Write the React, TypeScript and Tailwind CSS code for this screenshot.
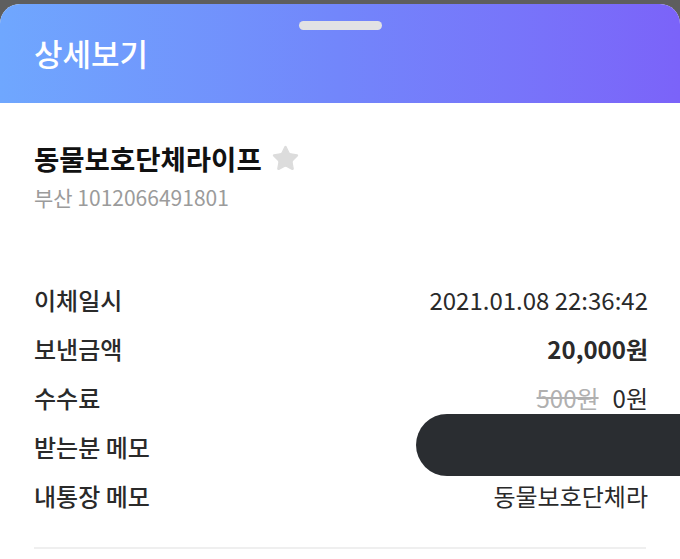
import { Star } from "lucide-react";

const rows = [
  { label: "이체일시", value: <span className="font-normal">2021.01.08 22:36:42</span> },
  { label: "보낸금액", value: <span className="font-bold">20,000원</span> },
  {
    label: "수수료",
    value: (
      <span className="flex items-center gap-[14px]">
        <span className="text-[#b0b0b0] line-through">500원</span>
        <span>0원</span>
      </span>
    ),
  },
  { label: "받는분 메모", value: null },
  { label: "내통장 메모", value: <span>동물보호단체라</span> },
];

const DetailSheet = () => {
  return (
    <section className="relative mt-[4px] flex h-[555px] flex-col overflow-hidden rounded-t-[20px] bg-white">
      <header className="relative h-[99px] bg-gradient-to-r from-[#6fa7fe] via-[#7286fb] to-[#7b63f9] px-[34px]">
        <div className="mx-auto mt-[17px] h-[9px] w-[83px] rounded-full bg-[#e2e2e4]" />
        <h1 className="mt-[1px] text-[31px] font-medium leading-[44px] text-white">상세보기</h1>
      </header>

      <div className="pl-[34px] pr-[32px]">
        <div className="mt-[38px] flex items-center gap-[9px]">
          <h2 className="text-[27.5px] font-bold leading-[34px] text-[#111]">동물보호단체라이프</h2>
          <Star className="h-[29px] w-[29px] fill-[#dcdcdc] text-[#dcdcdc]" strokeWidth={1} />
        </div>
        <p className="mt-[8px] text-[21px] leading-[28px] text-[#9b9b9b]">부산 1012066491801</p>

        <div className="mt-[64px] flex flex-col">
          {rows.map((row) => (
            <div
              key={row.label}
              className="flex h-[49px] items-center justify-between text-[24px] text-[#2a2a2a]"
            >
              <span className="font-medium">{row.label}</span>
              {row.value}
            </div>
          ))}
        </div>

        <div className="mr-[2px] mt-[27px] h-[2px] bg-[#efefef]" />
      </div>

      {/* redacted memo */}
      <div className="absolute left-[416px] top-[410px] h-[62px] w-[270px] rounded-l-full bg-[#2a2d31]" />
    </section>
  );
};

export default function App() {
  return (
    <div
      className="h-[559px] w-[680px] overflow-hidden bg-[#5e5e5e]"
      style={{ fontFamily: '"Noto Sans CJK KR", "Noto Sans", sans-serif' }}
    >
      <DetailSheet />
    </div>
  );
}
